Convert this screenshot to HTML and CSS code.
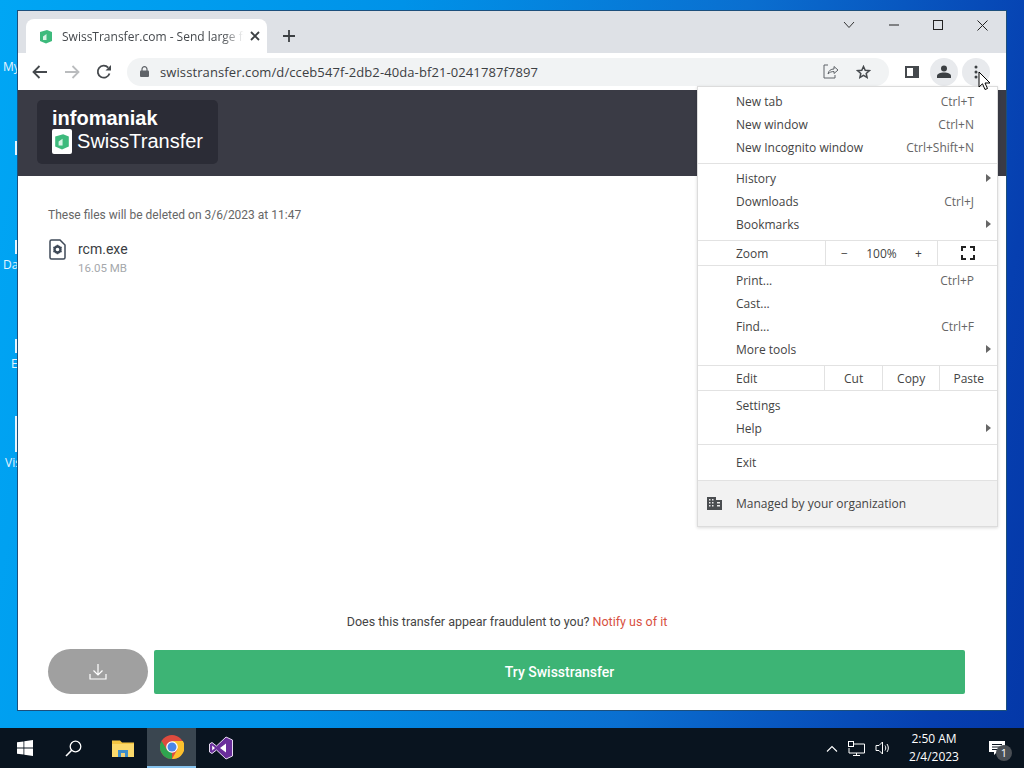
FILE: index.html
```html
<!DOCTYPE html>
<html lang="en">
    <head>
        <meta charset="UTF-8" />
        <title>SwissTransfer.com - Send large files</title>
        <link rel="stylesheet" href="styles.css">
    </head>
    <body>
        <div class="desktop">
            <span class="desk-label label-my">My</span>
            <span class="desk-bar bar-1"></span>
            <span class="desk-bar bar-2"></span>
            <span class="desk-label label-da">Da</span>
            <span class="desk-bar bar-3"></span>
            <span class="desk-label label-e">E</span>
            <span class="desk-bar bar-4"></span>
            <span class="desk-label label-vis">Vis</span>

            <div class="window">
                <!-- Tab strip -->
                <div class="tabstrip">
                    <div class="tab">
                        <svg class="tab-favicon" width="14" height="15" viewBox="0 0 14 15">
                            <path d="M1 3 8 1l5 2v9l-6 2.500L1 12z" fill="#3dba7c" />
                            <path d="M4 7.500 7.500 5v6H4z" fill="#d8f2e4" />
                        </svg>
                        <span class="tab-title">SwissTransfer.com - Send large fi</span>
                        <svg class="tab-close" width="10" height="10" viewBox="0 0 10 10">
                            <path d="M1 1l8 8M9 1 1 9" stroke="#3c4043" stroke-width="1.800" />
                        </svg>
                    </div>
                    <svg class="new-tab" width="14" height="14" viewBox="0 0 14 14">
                        <path d="M7 1v12M1 7h12" stroke="#3c4043" stroke-width="1.800" />
                    </svg>
                    <div class="window-controls">
                        <svg width="12" height="8" viewBox="0 0 12 8">
                            <path d="M1 1l5 5.500L11 1" fill="none" stroke="#333" stroke-width="1" />
                        </svg>
                        <svg width="10" height="10" viewBox="0 0 10 10">
                            <path d="M0 5h10" stroke="#222" stroke-width="1" />
                        </svg>
                        <svg width="10" height="10" viewBox="0 0 10 10">
                            <rect x="0.500" y="0.500" width="9" height="9" fill="none" stroke="#222" />
                        </svg>
                        <svg width="11" height="11" viewBox="0 0 11 11">
                            <path d="M.5.500l10 10M10.500.500l-10 10" stroke="#222" stroke-width="1" />
                        </svg>
                    </div>
                </div>

                <!-- Toolbar -->
                <div class="toolbar">
                    <svg class="nav-icon" width="16" height="14" viewBox="0 0 16 14">
                        <path d="M15 7H2M7.500 1 1.500 7l6 6" fill="none" stroke="#45494d" stroke-width="1.800" />
                    </svg>
                    <svg class="nav-icon" width="16" height="14" viewBox="0 0 16 14">
                        <path d="M1 7h13M8.500 1l6 6-6 6" fill="none" stroke="#babcbe" stroke-width="1.800" />
                    </svg>
                    <svg class="nav-icon" width="16" height="16" viewBox="0 0 16 16">
                        <path d="M13.500 9.500A6 6 0 1 1 12.200 3.600" fill="none" stroke="#45494d" stroke-width="1.800" />
                        <path d="M9.500 6.500h5.500V1z" fill="#45494d" />
                    </svg>
                    <div class="omnibox">
                        <svg width="9" height="11" viewBox="0 0 9 11">
                            <path d="M2 5V3.200a2.500 2.500 0 0 1 5 0V5" fill="none" stroke="#5f6368" stroke-width="1.200" />
                            <rect y="4.500" width="9" height="6.500" rx="1" fill="#5f6368" />
                        </svg>
                        <span class="url">swisstransfer.com/d/cceb547f-2db2-40da-bf21-0241787f7897</span>
                        <svg class="omni-share" width="16" height="15" viewBox="0 0 16 15">
                            <path d="M5 1H1v13h11v-3" fill="none" stroke="#5f6368" stroke-width="1" />
                            <path d="M5 10c.5-3.500 3-5 6-5V2.500L15 6l-4 3.500V7.500c-2.500 0-4.500.8-6 2.500z" fill="none" stroke="#5f6368" stroke-width="1" />
                        </svg>
                        <svg class="omni-star" width="15" height="14" viewBox="0 0 15 14">
                            <path d="M7.500 1.500 9.200 5.300l4.100.4-3.100 2.700.9 4-3.600-2.100-3.600 2.100.9-4L1.700 5.700l4.100-.4z" fill="none" stroke="#45494d" stroke-width="1.500" />
                        </svg>
                    </div>
                    <svg class="side-icon" width="14" height="12" viewBox="0 0 14 12">
                        <rect x="0" y="0" width="14" height="12" fill="#45494d" />
                        <rect x="2" y="2" width="6" height="8" fill="#fff" />
                    </svg>
                    <span class="round-btn">
                        <svg width="14" height="13" viewBox="0 0 14 13">
                            <circle cx="7" cy="3.500" r="3" fill="#3c4043" />
                            <path d="M0 13v-2c0-2 3-3.500 7-3.500s7 1.500 7 3.500v2z" fill="#3c4043" />
                        </svg>
                    </span>
                    <span class="round-btn">
                        <svg width="4" height="14" viewBox="0 0 4 14">
                            <circle cx="2" cy="2" r="1.500" fill="#3c4043" />
                            <circle cx="2" cy="7" r="1.500" fill="#3c4043" />
                            <circle cx="2" cy="12" r="1.500" fill="#3c4043" />
                        </svg>
                    </span>
                </div>

                <!-- Page -->
                <div class="page">
                    <div class="page-header">
                        <div class="brand">
                            <div class="brand-name">infomaniak</div>
                            <div class="brand-row">
                                <span class="brand-logo">
                                    <svg width="16" height="17" viewBox="0 0 14 15">
                                        <path d="M1 3 8 1l5 2v9l-6 2.500L1 12z" fill="#3dba7c" />
                                        <path d="M4 7.500 7.500 5v6H4z" fill="#d8f2e4" />
                                    </svg>
                                </span>
                                <span class="brand-product">SwissTransfer</span>
                            </div>
                        </div>
                    </div>

                    <div class="page-body">
                        <p class="expiry">These files will be deleted on 3/6/2023 at 11:47</p>
                        <div class="file">
                            <svg width="17" height="21" viewBox="0 0 17 21">
                                <path d="M2.500 1H11l5 5v12.500a1.500 1.500 0 0 1-1.500 1.500h-12A1.500 1.500 0 0 1 1 18.500v-16A1.500 1.500 0 0 1 2.500 1z" fill="none" stroke="#3f4a58" stroke-width="1.500" />
                                <circle cx="8.500" cy="10.500" r="3" fill="none" stroke="#3f4a58" stroke-width="2.400" />
                                <path d="M8.500 5.800v1.500M8.500 13.700v1.500M4.400 8.200l1.300.7M11.300 12.100l1.300.7M4.400 12.800l1.300-.7M11.300 8.900l1.300-.7" stroke="#3f4a58" stroke-width="1.500" />
                            </svg>
                            <div class="file-info">
                                <div class="file-name">rcm.exe</div>
                                <div class="file-size">16.05 MB</div>
                            </div>
                        </div>

                        <div class="footer">
                            <p class="report">Does this transfer appear fraudulent to you? <a class="report-link">Notify us of it</a></p>
                            <div class="actions">
                                <div class="download-btn">
                                    <svg width="18" height="17" viewBox="0 0 18 17">
                                        <path d="M9 1v11M4.500 7.500 9 12l4.500-4.500M1 11v5h16v-5" fill="none" stroke="#fff" stroke-width="1.200" />
                                    </svg>
                                </div>
                                <div class="try-btn">Try Swisstransfer</div>
                            </div>
                        </div>
                    </div>

                    <!-- Chrome menu -->
                    <div class="menu">
                        <div class="menu-group">
                            <div class="menu-item"><span>New tab</span><span class="shortcut">Ctrl+T</span></div>
                            <div class="menu-item"><span>New window</span><span class="shortcut">Ctrl+N</span></div>
                            <div class="menu-item"><span>New Incognito window</span><span class="shortcut">Ctrl+Shift+N</span></div>
                        </div>
                        <div class="menu-group">
                            <div class="menu-item"><span>History</span><span class="arrow"></span></div>
                            <div class="menu-item"><span>Downloads</span><span class="shortcut">Ctrl+J</span></div>
                            <div class="menu-item"><span>Bookmarks</span><span class="arrow"></span></div>
                        </div>
                        <div class="menu-split">
                            <span class="split-label">Zoom</span>
                            <div class="zoom-controls">
                                <span>−</span><span>100%</span><span>+</span>
                            </div>
                            <div class="zoom-full">
                                <svg width="14" height="14" viewBox="0 0 14 14">
                                    <path d="M1 5V1h4M9 1h4v4M13 9v4H9M5 13H1V9" fill="none" stroke="#222" stroke-width="2" />
                                </svg>
                            </div>
                        </div>
                        <div class="menu-group">
                            <div class="menu-item"><span>Print...</span><span class="shortcut">Ctrl+P</span></div>
                            <div class="menu-item"><span>Cast...</span></div>
                            <div class="menu-item"><span>Find...</span><span class="shortcut">Ctrl+F</span></div>
                            <div class="menu-item"><span>More tools</span><span class="arrow"></span></div>
                        </div>
                        <div class="menu-split">
                            <span class="split-label">Edit</span>
                            <span class="edit-btn">Cut</span>
                            <span class="edit-btn">Copy</span>
                            <span class="edit-btn">Paste</span>
                        </div>
                        <div class="menu-group">
                            <div class="menu-item"><span>Settings</span></div>
                            <div class="menu-item"><span>Help</span><span class="arrow"></span></div>
                        </div>
                        <div class="menu-group exit-group">
                            <div class="menu-item"><span>Exit</span></div>
                        </div>
                        <div class="managed">
                            <svg width="15" height="13" viewBox="0 0 15 13">
                                <path d="M0 0h9v3h6v10H0z" fill="#4a4d50" />
                                <path d="M2 2h1.500v1.500H2zM5 2h1.500v1.500H5zM2 5h1.500v1.500H2zM5 5h1.500v1.500H5zM2 8h1.500v1.500H2zM5 8h1.500v1.500H5zM10 5h3v1.500h-3zM10 8h3v1.500h-3z" fill="#e9e9e9" />
                            </svg>
                            <span>Managed by your organization</span>
                        </div>
                    </div>
                </div>
            </div>

            <!-- Mouse pointer -->
            <svg class="pointer" width="13" height="20" viewBox="0 0 13 20">
                <path d="M1 1v15l3.500-3.200 2.500 5.700 2.500-1-2.500-5.500H12z" fill="#fff" stroke="#000" stroke-width="1" />
            </svg>
        </div>

        <!-- Taskbar -->
        <div class="taskbar">
            <div class="task-icon">
                <svg width="16" height="16" viewBox="0 0 16 16">
                    <path d="M0 2.300 6.500 1.400v6.200H0zM7.300 1.300 16 0v7.600H7.300zM0 8.400h6.500v6.200L0 13.700zM7.300 8.400H16V16l-8.700-1.300z" fill="#fff" />
                </svg>
            </div>
            <div class="task-icon">
                <svg width="17" height="17" viewBox="0 0 17 17">
                    <circle cx="10.500" cy="6.500" r="5.300" fill="none" stroke="#fff" stroke-width="1.300" />
                    <path d="M6.700 10.300 1 16" stroke="#fff" stroke-width="1.600" />
                </svg>
            </div>
            <div class="task-icon">
                <svg width="22" height="18" viewBox="0 0 22 18">
                    <path d="M0 1.500h8l2 2h12V18H0z" fill="#f4c542" />
                    <path d="M0 5h22v13H0z" fill="#fbd96b" />
                    <path d="M6 11h10v7H6z" fill="#3e8ecb" />
                    <path d="M9 14h4v4H9z" fill="#f2d277" />
                </svg>
            </div>
            <div class="task-icon task-active">
                <svg width="24" height="24" viewBox="0 0 24 24">
                    <circle cx="12" cy="12" r="12" fill="#dd4b3e" />
                    <path d="M12 24a12 12 0 0 1-10.400-18L7 15l5 3z" fill="#2fa44f" />
                    <path d="M12 24 17.600 14 12 6h10.900A12 12 0 0 1 12 24z" fill="#fbc02d" />
                    <circle cx="12" cy="12" r="5.800" fill="#fff" />
                    <circle cx="12" cy="12" r="4.500" fill="#4a86e8" />
                </svg>
            </div>
            <div class="task-icon">
                <svg width="24" height="24" viewBox="0 0 24 24">
                    <path d="M17 1 23.500 4v16L17 23 7.500 14 3 17.500.5 16V8L3 6.500 7.500 10z" fill="#6a2e9b" stroke="#e8dcf2" stroke-width="1" />
                    <path d="M17 7.500v9L11 12zM3.200 9.500 6 12l-2.800 2.500z" fill="#fff" />
                </svg>
            </div>

            <div class="tray">
                <svg width="12" height="7" viewBox="0 0 12 7">
                    <path d="M1 6.500 6 1.500l5 5" fill="none" stroke="#fff" stroke-width="1.100" />
                </svg>
                <svg width="17" height="15" viewBox="0 0 17 15">
                    <path d="M4 3h12.500v9H1V7M8.500 12v2.500M5 14.500h7" fill="none" stroke="#fff" stroke-width="1" />
                    <rect x="0.500" y="0.500" width="5" height="5" fill="#0a1420" stroke="#fff" />
                </svg>
                <svg width="16" height="14" viewBox="0 0 16 14">
                    <path d="M1 4.500h3L7.500 1v12L4 9.500H1z" fill="none" stroke="#fff" stroke-width="1" />
                    <path d="M10 4.500c1 1.500 1 3.500 0 5M12 3c1.800 2.500 1.800 5.500 0 8" fill="none" stroke="#fff" stroke-width="1" />
                </svg>
                <div class="clock">
                    <div>2:50 AM</div>
                    <div>2/4/2023</div>
                </div>
                <div class="notify">
                    <svg width="16" height="15" viewBox="0 0 16 15">
                        <path d="M0 0h16v11H8l-3 3v-3H0z" fill="#fff" />
                        <path d="M3 3.500h10M3 6h10M3 8.500h6" stroke="#0a1420" stroke-width="1" />
                    </svg>
                    <span class="notify-badge">1</span>
                </div>
            </div>
        </div>
    </body>
</html>
```

FILE: styles.css
```css
* {
    box-sizing: border-box;
}

html,
body {
    margin: 0;
    height: 768px;
    overflow: hidden;
}

body {
    font-family: "Open Sans", "Liberation Sans", sans-serif;
    display: flex;
    flex-direction: column;
}

/* Desktop */
.desktop {
    position: relative;
    height: 728px;
    background: linear-gradient(100deg, #00a6f4 0%, #0092e8 35%, #0a6fd0 65%, #063fb0 92%, #0438a8 100%);
}

.desk-label {
    position: absolute;
    left: 3px;
    font-size: 12px;
    color: #e4f4ff;
}

.label-my { top: 58px; }
.label-da { top: 256px; }
.label-e { top: 355px; left: 11px; }
.label-vis { top: 454px; left: 5px; }

.desk-bar {
    position: absolute;
    left: 15px;
    width: 3px;
    height: 14px;
    background: #e8f4fb;
}

.bar-1 { top: 141px; }
.bar-2 { top: 240px; }
.bar-3 { top: 339px; }
.bar-4 { top: 416px; height: 36px; }

.window {
    position: absolute;
    left: 17px;
    top: 10px;
    width: 990px;
    height: 701px;
    border: 1px solid #1c4f7c;
    display: flex;
    flex-direction: column;
    background: #fff;
}

.tabstrip {
    height: 42px;
    flex-shrink: 0;
    background: #dee1e6;
    display: flex;
    align-items: flex-end;
    padding-left: 8px;
}

.tab {
    width: 241px;
    height: 34px;
    background: #fff;
    border-radius: 8px 8px 0 0;
    display: flex;
    align-items: center;
    padding: 0 7px 0 13px;
    font-size: 12px;
    color: #45494d;
}

.tab-title {
    flex: 1;
    margin-left: 9px;
    white-space: nowrap;
    overflow: hidden;
    -webkit-mask-image: linear-gradient(90deg, #000 88%, transparent);
    mask-image: linear-gradient(90deg, #000 88%, transparent);
}

.tab-close {
    margin-left: 6px;
    flex-shrink: 0;
}

.new-tab {
    margin: 0 0 10px 15px;
}

.window-controls {
    margin-left: auto;
    height: 42px;
    display: flex;
    align-items: center;
    gap: 34px;
    padding: 0 18px 14px 0;
}

.toolbar {
    height: 37px;
    flex-shrink: 0;
    background: #fff;
    display: flex;
    align-items: center;
    padding-left: 14px;
}

.nav-icon {
    margin-right: 16px;
}

.omnibox {
    width: 762px;
    height: 28px;
    margin-left: -1px;
    border-radius: 14px;
    background: #f1f3f4;
    display: flex;
    align-items: center;
    padding-left: 13px;
    font-size: 13px;
    color: #3c4043;
}

.url {
    margin-left: 11px;
    letter-spacing: 0.1px;
}

.omni-share {
    margin-left: auto;
}

.omni-star {
    margin: 0 18px 0 17px;
}

.side-icon {
    margin-left: 16px;
}

.round-btn {
    width: 28px;
    height: 28px;
    border-radius: 50%;
    display: flex;
    align-items: center;
    justify-content: center;
    background: #e8eaed;
    margin-left: 11px;
}

.round-btn + .round-btn {
    margin-left: 4px;
}

/* Page */
.page {
    position: relative;
    flex: 1;
    display: flex;
    flex-direction: column;
    font-family: Roboto, "Liberation Sans", sans-serif;
}

.page-header {
    height: 86px;
    flex-shrink: 0;
    background: #3a3b45;
    padding: 10px 19px;
}

.brand {
    width: 181px;
    height: 64px;
    border-radius: 5px;
    background: #2b2c36;
    padding: 7px 15px;
    color: #fff;
}

.brand-name {
    font-family: "Liberation Sans", sans-serif;
    font-size: 20px;
    font-weight: 700;
    line-height: 22px;
}

.brand-row {
    display: flex;
    align-items: center;
    gap: 5px;
}

.brand-logo {
    width: 24px;
    height: 25px;
    border-radius: 2px;
    background: #fff;
    display: flex;
    align-items: center;
    justify-content: center;
}

.brand-product {
    font-family: "Liberation Sans", sans-serif;
    font-size: 20px;
}

.page-body {
    flex: 1;
    display: flex;
    flex-direction: column;
    padding: 32px 40px 16px 30px;
}

.expiry {
    margin: 0;
    font-size: 12px;
    line-height: 14px;
    color: #666;
}

.file {
    display: flex;
    align-items: flex-start;
    gap: 12px;
    margin-top: 17px;
    margin-left: 1px;
}

.file-name {
    font-size: 14px;
    line-height: 20px;
    color: #3a3d42;
}

.file-size {
    font-size: 11.500px;
    line-height: 18px;
    color: #a5a8ac;
}

.footer {
    margin-top: auto;
}

.report {
    margin: 0 0 19px;
    font-size: 12.500px;
    line-height: 16px;
    color: #444;
    text-align: center;
}

.report-link {
    color: #d8503f;
}

.actions {
    display: flex;
    align-items: center;
    gap: 6px;
}

.download-btn {
    width: 100px;
    height: 45px;
    border-radius: 23px;
    background: #a0a0a0;
    display: flex;
    align-items: center;
    justify-content: center;
}

.try-btn {
    width: 811px;
    height: 44px;
    border-radius: 2px;
    background: #3db475;
    color: #fff;
    font-size: 14px;
    font-weight: 500;
    display: flex;
    align-items: center;
    justify-content: center;
}

/* Chrome menu */
.menu {
    position: absolute;
    left: 679px;
    top: -4px;
    width: 301px;
    height: 441px;
    background: #fff;
    border: 1px solid #dcdcdc;
    box-shadow: 0 1px 3px rgba(0, 0, 0, 0.15);
    font-family: "Open Sans", "Liberation Sans", sans-serif;
    font-size: 12px;
    color: #444;
    display: flex;
    flex-direction: column;
}

.menu-group {
    padding: 3px 0 4px;
    border-bottom: 1px solid #e2e2e2;
}

.menu-group:first-child {
    padding-top: 3px;
}

.menu-item {
    height: 23px;
    padding: 0 23px 0 38px;
    display: flex;
    align-items: center;
    justify-content: space-between;
    position: relative;
}

.shortcut {
    color: #666;
}

.arrow {
    position: absolute;
    right: 6px;
    top: 7px;
    border-left: 5px solid #666;
    border-top: 4px solid transparent;
    border-bottom: 4px solid transparent;
}

.menu-split {
    height: 25px;
    display: flex;
    align-items: stretch;
    border-bottom: 1px solid #e2e2e2;
}

.split-label {
    width: 127px;
    padding-left: 38px;
    display: flex;
    align-items: center;
}

.zoom-controls {
    width: 112px;
    border-left: 1px solid #e2e2e2;
    display: flex;
    align-items: center;
    justify-content: space-between;
    padding: 0 15px;
}

.zoom-full {
    flex: 1;
    border-left: 1px solid #e2e2e2;
    display: flex;
    align-items: center;
    justify-content: center;
}

.edit-btn {
    width: 58px;
    border-left: 1px solid #e2e2e2;
    display: flex;
    align-items: center;
    justify-content: center;
}

.exit-group {
    padding: 6px 0;
}

.managed {
    flex: 1;
    background: #f2f2f2;
    display: flex;
    align-items: center;
    gap: 14px;
    padding-left: 9px;
}

.pointer {
    position: absolute;
    left: 978px;
    top: 71px;
}

/* Taskbar */
.taskbar {
    height: 40px;
    flex-shrink: 0;
    background: #09141f;
    display: flex;
    align-items: stretch;
    color: #fff;
}

.task-icon {
    width: 49px;
    display: flex;
    align-items: center;
    justify-content: center;
}

.task-active {
    background: #3a4650;
    border-bottom: 2px solid #86c3ee;
}

.tray {
    margin-left: auto;
    display: flex;
    align-items: center;
    gap: 10px;
}

.clock {
    margin-left: 5px;
    width: 56px;
    text-align: center;
    font-size: 12px;
    line-height: 18px;
}

.notify {
    position: relative;
    width: 52px;
    display: flex;
    align-items: center;
    padding-left: 17px;
}

.notify-badge {
    position: absolute;
    left: 24px;
    top: 4px;
    width: 16px;
    height: 16px;
    border-radius: 50%;
    background: #4a4f55;
    font-size: 11px;
    line-height: 16px;
    text-align: center;
}
```
